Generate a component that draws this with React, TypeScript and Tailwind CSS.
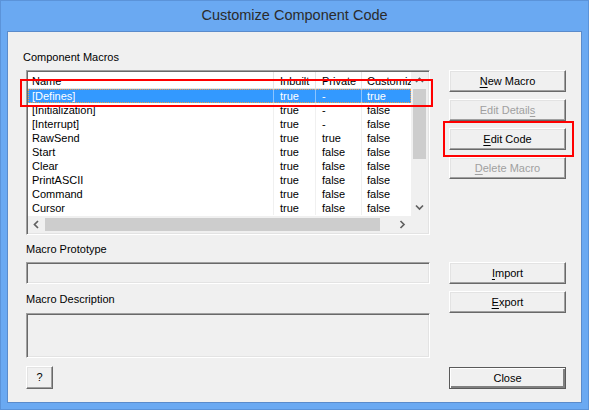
import type { ReactNode } from "react";
import clsx from "clsx";

const ui = "font-['Liberation_Sans',Arial,sans-serif] text-[11px] leading-[13px]";

type Row = [string, string, string, string];

const rows: Row[] = [
  ["[Defines]", "true", "-", "true"],
  ["[Initialization]", "true", "-", "false"],
  ["[Interrupt]", "true", "-", "false"],
  ["RawSend", "true", "true", "false"],
  ["Start", "true", "false", "false"],
  ["Clear", "true", "false", "false"],
  ["PrintASCII", "true", "false", "false"],
  ["Command", "true", "false", "false"],
  ["Cursor", "true", "false", "false"],
];

// column widths: Name, Inbuilt, Private, Customize (clipped by scrollbar)
const cols = ["w-[246px] pl-[4px]", "w-[42px] pl-[6px]", "w-[46px] pl-[6px]", "w-[49px] pl-[5px]"];

const sunken =
  "border border-t-[#a0a0a0] border-l-[#a0a0a0] border-b-white border-r-white shadow-[inset_1px_1px_0_#696969,inset_-1px_-1px_0_#e3e3e3]";

const Chevron = ({ dir }: { dir: "up" | "down" | "left" | "right" }) => {
  const pts = {
    up: "1,5 4.5,1.5 8,5",
    down: "1,1.5 4.5,5 8,1.5",
    left: "5,1 1.5,4.5 5,8",
    right: "1.5,1 5,4.5 1.5,8",
  }[dir];
  const vertical = dir === "up" || dir === "down";
  return (
    <svg width={vertical ? 9 : 7} height={vertical ? 7 : 9} viewBox={vertical ? "0 0 9 7" : "0 0 7 9"}>
      <polyline points={pts} fill="none" stroke="#606060" strokeWidth="1.7" />
    </svg>
  );
};

interface BtnProps {
  children: ReactNode;
  disabled?: boolean;
  isDefault?: boolean;
  className?: string;
}

const Btn = ({ children, disabled, isDefault, className }: BtnProps) => (
  <button
    type="button"
    className={clsx(
      "flex h-[22px] w-[117px] items-center justify-center bg-[#f0f0f0]",
      ui,
      disabled ? "text-[#a0a0a0]" : "text-black",
      isDefault
        ? "border border-[#5a5a5a] shadow-[inset_1px_1px_0_#fff,inset_-2px_-2px_0_#808080]"
        : "border border-t-white border-l-white border-b-[#696969] border-r-[#696969] shadow-[inset_-1px_-1px_0_#a0a0a0,inset_1px_1px_0_#e3e3e3]",
      className,
    )}
  >
    {children}
  </button>
);

const U = ({ children }: { children: ReactNode }) => (
  <span className="underline underline-offset-[2px]">{children}</span>
);

const MacroList = () => (
  <div className={clsx("flex h-[165px] w-[404px] flex-col bg-white", sunken, "p-px")}>
    <div className="flex h-[144px]">
      <div className="flex w-[383px] flex-col overflow-hidden">
        {/* header */}
        <div className="flex h-[17px] shrink-0 items-center border-b border-[#e5e5e5] text-black">
          {["Name", "Inbuilt", "Private", "Customize"].map((h, i) => (
            <div
              key={h}
              className={clsx("h-full shrink-0 overflow-hidden whitespace-nowrap pt-[3px]", cols[i], i < 3 && "border-r border-[#e5e5e5]")}
            >
              {h}
            </div>
          ))}
        </div>
        {rows.map((r, ri) => (
          <div
            key={r[0]}
            className={clsx(
              "relative flex h-[14px] shrink-0 items-center",
              ri === 0 ? "bg-[#3399ff] text-white" : "text-black",
            )}
          >
            {r.map((c, i) => (
              <div
                key={i}
                className={clsx(
                  "h-full shrink-0 overflow-hidden whitespace-nowrap pt-px",
                  cols[i],
                  i < 3 && (ri === 0 ? "border-r border-[#8cc4ff]" : "border-r border-[#f0f0f0]"),
                )}
              >
                {c}
              </div>
            ))}
            {ri === 0 && (
              <div className="pointer-events-none absolute inset-0 border border-dotted border-[#f5a04a]" />
            )}
          </div>
        ))}
      </div>
      {/* vertical scrollbar */}
      <div className="flex w-[17px] flex-col bg-[#f0f0f0]">
        <div className="flex h-[17px] items-center justify-center">
          <Chevron dir="up" />
        </div>
        <div className="mx-[2px] h-[70px] bg-[#cdcdcd]" />
        <div className="flex-1" />
        <div className="flex h-[17px] items-center justify-center">
          <Chevron dir="down" />
        </div>
      </div>
    </div>
    {/* horizontal scrollbar */}
    <div className="flex h-[17px] bg-[#f0f0f0]">
      <div className="flex w-[17px] items-center justify-center">
        <Chevron dir="left" />
      </div>
      <div className="my-[2px] w-[335px] bg-[#cdcdcd]" />
      <div className="flex-1" />
      <div className="flex w-[17px] items-center justify-center">
        <Chevron dir="right" />
      </div>
      <div className="w-[17px]" />
    </div>
  </div>
);

export default function App() {
  return (
    <div className="relative h-[410px] w-[589px] overflow-hidden border border-[#5b93d9] bg-[#6aa9f2]">
      <div className="flex h-[30px] items-center justify-center font-['Liberation_Sans',Arial,sans-serif] text-[14.5px] text-[#2b2b2b]">
        Customize Component Code
      </div>
      <div className={clsx("mx-[6px] flex h-[372px] border border-[#5a8bcb] bg-[#f0f0f0]", ui)}>
        {/* left column */}
        <div className="ml-[18px] flex w-[404px] flex-col pt-[19px]">
          <div className="ml-[-3px] h-[13px] text-black">Component Macros</div>
          <div className="mt-[6px]">
            <MacroList />
          </div>
          <div className="mt-[8px] h-[13px] text-black">Macro Prototype</div>
          <div className={clsx("mt-[6px] h-[22px] bg-[#f0f0f0]", sunken)} />
          <div className="mt-[9px] h-[13px] text-black">Macro Description</div>
          <div className={clsx("mt-[7px] h-[45px] bg-[#f0f0f0]", sunken)} />
          <Btn className="mt-[8px] !w-[27px] !h-[23px]">?</Btn>
        </div>
        {/* right column */}
        <div className="ml-[19px] flex flex-col pt-[38px]">
          <Btn>
            <U>N</U>ew Macro
          </Btn>
          <Btn disabled className="mt-[7px]">
            Edit Detail<U>s</U>
          </Btn>
          <Btn className="mt-[7px]">
            <U>E</U>dit Code
          </Btn>
          <Btn disabled className="mt-[7px]">
            <U>D</U>elete Macro
          </Btn>
          <Btn className="mt-[83px]">
            <U>I</U>mport
          </Btn>
          <Btn className="mt-[7px]">
            <U>E</U>xport
          </Btn>
          <Btn isDefault className="mt-[54px]">
            Close
          </Btn>
        </div>
      </div>
      {/* red annotation boxes */}
      <div className="pointer-events-none absolute left-[19px] top-[78px] h-[28px] w-[413px] border-2 border-[#ff0000]" />
      <div className="pointer-events-none absolute left-[442px] top-[120px] h-[36px] w-[131px] border-2 border-[#ff0000]" />
    </div>
  );
}
